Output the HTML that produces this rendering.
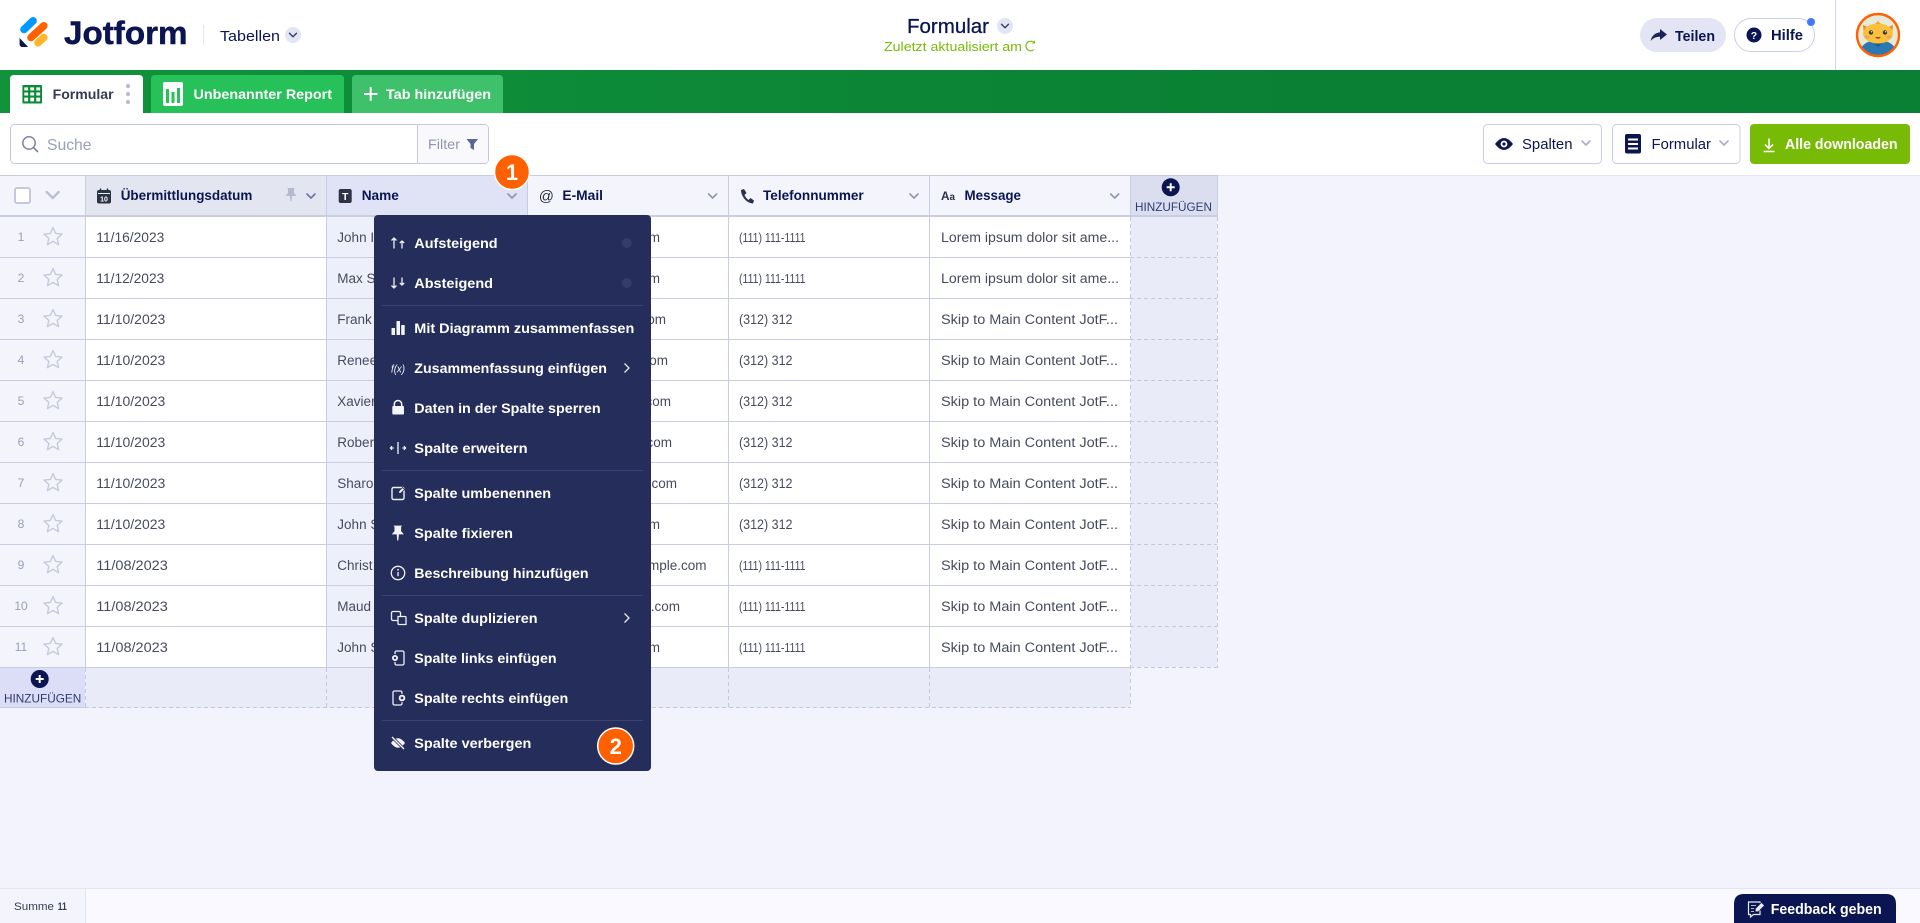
<!DOCTYPE html>
<html lang="de">
<head>
<meta charset="utf-8">
<title>Jotform Tabellen</title>
<style>
html,body{margin:0;padding:0;background:#f3f3fe;width:1920px;height:923px;overflow:hidden}
svg{display:block}
text{font-family:"Liberation Sans",sans-serif;white-space:pre}
.b{font-weight:700}
.hd{font-weight:700;font-size:14px;fill:#0a1551}
.cell{font-size:13.5px;fill:#474b5e}
.ph{font-size:12.5px}
.num{font-size:12px;fill:#9ba0b9;text-anchor:middle}
.m{font-weight:700;font-size:14px;fill:#fff}
.tb{font-size:14.5px;fill:#0a1551}
.add{font-size:12px;fill:#2f3a70}
</style>
</head>
<body>
<svg xmlns="http://www.w3.org/2000/svg" width="1920" height="923" viewBox="0 0 1920 923">
<defs>
<linearGradient id="gb" x1="0" x2="1" y1="0" y2="0"><stop offset="0" stop-color="#10933a"/><stop offset=".68" stop-color="#0a8034"/><stop offset="1" stop-color="#0a8034"/></linearGradient>
<path id="chev" d="M-5 -2.5L0 2.5L5 -2.5" fill="none" stroke-width="2" stroke-linecap="round" stroke-linejoin="round"/>
<polygon id="star" points="0,-9.5 2.59,-3.56 9.03,-2.94 4.18,1.36 5.58,7.69 0,4.4 -5.58,7.69 -4.18,1.36 -9.03,-2.94 -2.59,-3.56" fill="none" stroke="#c6cadc" stroke-width="1.4" stroke-linejoin="round"/>
<path id="pin" d="M-4 -6.5h8l-1 1v4l2.5 3h-4.5l-.5 5.5h-1l-.5-5.5h-4.5l2.5-3v-4z"/>
<g id="plus"><circle r="9" fill="#0a1551"/><path d="M-4 0H4M0 -4V4" stroke="#fff" stroke-width="2"/></g>
<g id="star-row"><use href="#star" x="53" y="237"/></g>
<clipPath id="av"><circle cx="1878" cy="35" r="21"/></clipPath>
</defs>

<!-- page -->
<rect width="1920" height="923" fill="#f3f3fe"/>

<!-- top header -->
<rect width="1920" height="70" fill="#fff"/>
<g fill="none" stroke-linecap="round" stroke-width="7.6">
<path d="M24 29.500L33 20.800" stroke="#0099ff"/>
<path d="M31 37.500L43.800 25.800" stroke="#ff6100"/>
<path d="M38 42.800L43.800 37.500" stroke="#ffb629"/>
</g>
<path d="M19.600 38v6q0 3 3 3h5.500z" fill="#0a1551"/>
<text x="64" y="44" class="b" font-size="32" fill="#0a1551" stroke="#0a1551" stroke-width=".5" textLength="123.500" lengthAdjust="spacingAndGlyphs">Jotform</text>
<rect x="203" y="25" width="1" height="20" fill="#e3e5f5"/>
<text x="220" y="41" font-size="15" fill="#0a1551" textLength="60" lengthAdjust="spacingAndGlyphs">Tabellen</text>
<circle cx="293" cy="35" r="8" fill="#e3e5f5"/>
<use href="#chev" transform="translate(293 35) scale(.7)" stroke="#343c6a"/>

<text x="907" y="33" font-size="20" fill="#0a1551" stroke="#0a1551" stroke-width=".3" textLength="82" lengthAdjust="spacingAndGlyphs">Formular</text>
<circle cx="1005" cy="26" r="8" fill="#e3e5f5"/>
<use href="#chev" transform="translate(1005 26) scale(.7)" stroke="#343c6a"/>
<text x="884" y="51" font-size="13" fill="#78bb07" textLength="138" lengthAdjust="spacingAndGlyphs">Zuletzt aktualisiert am</text>
<path d="M1034 42.500a4.800 4.800 0 1 0 0 7" fill="none" stroke="#78bb07" stroke-width="1.200"/>
<path d="M1035 40.500v3h-3z" fill="#78bb07"/>

<rect x="1640" y="18" width="86" height="34" rx="17" fill="#e3e5f5"/>
<path d="M1660 29l7 5.500-7 5.500v-3.300c-4 0-7 1.300-9.400 4.300c1-5 4-8 9.400-8.800z" fill="#1c2558"/>
<text x="1675" y="41" class="b" font-size="14.500" fill="#0a1551" textLength="40" lengthAdjust="spacingAndGlyphs">Teilen</text>
<rect x="1734.500" y="18.500" width="80" height="33" rx="16.500" fill="#fff" stroke="#c8ceed"/>
<circle cx="1754" cy="35" r="7.500" fill="#0a1551"/>
<text x="1754" y="39" class="b" font-size="10.500" fill="#fff" text-anchor="middle">?</text>
<text x="1771" y="40" class="b" font-size="14.500" fill="#0a1551" textLength="32" lengthAdjust="spacingAndGlyphs">Hilfe</text>
<circle cx="1811" cy="22" r="4" fill="#4277ff"/>
<rect x="1835" y="0" width="1" height="70" fill="#d3d6f0"/>

<!-- avatar -->
<circle cx="1878" cy="35" r="21" fill="#e6ead9"/>
<g clip-path="url(#av)">
<path d="M1860 58v-8q3-7 11-9h14q8 2 11 9v8z" fill="#2b78b3"/>
<path d="M1872 42l6 5 6-5z" fill="#1d5d92"/>
<path d="M1863 25l1 11 8-7zM1893 25l-1 11-8-7z" fill="#f08a24"/>
<ellipse cx="1878" cy="33.500" rx="15" ry="10" fill="#fbc13c"/>
<path d="M1875 24l3-3 3 3z" fill="#f4a72e"/>
<circle cx="1871" cy="32.500" r="2.200" fill="#3a3a3a"/><circle cx="1885" cy="32.500" r="2.200" fill="#3a3a3a"/>
<circle cx="1871.600" cy="31.800" r=".7" fill="#fff"/><circle cx="1885.600" cy="31.800" r=".7" fill="#fff"/>
<ellipse cx="1867" cy="37" rx="2.500" ry="1.600" fill="#f4a06a"/><ellipse cx="1889" cy="37" rx="2.500" ry="1.600" fill="#f4a06a"/>
<path d="M1875 37q3 3.500 6 0z" fill="#b8352a"/>
</g>
<circle cx="1878" cy="35" r="21" fill="none" stroke="#ff6100" stroke-width="2.400"/>

<!-- green tab bar -->
<rect y="70" width="1920" height="43" fill="url(#gb)"/>
<path d="M10 113V79q0-4 4-4h125q4 0 4 4v34z" fill="#fff"/>
<rect x="22.400" y="85" width="19.600" height="18.500" rx="1" fill="#0d8a38"/>
<g fill="#fff">
<rect x="24.300" y="87.400" width="3.800" height="3"/><rect x="30.300" y="87.400" width="3.800" height="3"/><rect x="36.300" y="87.400" width="3.800" height="3"/>
<rect x="24.300" y="92.500" width="3.800" height="3"/><rect x="30.300" y="92.500" width="3.800" height="3"/><rect x="36.300" y="92.500" width="3.800" height="3"/>
<rect x="24.300" y="97.600" width="3.800" height="3.800"/><rect x="30.300" y="97.600" width="3.800" height="3.800"/><rect x="36.300" y="97.600" width="3.800" height="3.800"/>
</g>
<text x="52.600" y="99" class="b" font-size="14" fill="#343c54" textLength="61" lengthAdjust="spacingAndGlyphs">Formular</text>
<circle cx="128" cy="86" r="2.200" fill="#b8bdd0"/><circle cx="128" cy="94" r="2.200" fill="#b8bdd0"/><circle cx="128" cy="102" r="2.200" fill="#b8bdd0"/>

<path d="M151 113V79q0-4 4-4h185q4 0 4 4v34z" fill="#27c15a"/>
<rect x="163" y="82" width="20" height="24" rx="2" fill="#fff"/>
<g fill="#27c15a"><rect x="166" y="89" width="3" height="14"/><rect x="171.500" y="92" width="3" height="11"/><rect x="177" y="88" width="3" height="15"/></g>
<text x="193.500" y="99" class="b" font-size="14" fill="#fff" textLength="138.500" lengthAdjust="spacingAndGlyphs">Unbenannter Report</text>

<path d="M352 113V79q0-4 4-4h143q4 0 4 4v34z" fill="#3fc06b"/>
<path d="M364 94h13.500M370.700 87.200v13.600" stroke="#fff" stroke-width="2"/>
<text x="386" y="99" class="b" font-size="14" fill="#fff" textLength="105" lengthAdjust="spacingAndGlyphs">Tab hinzufügen</text>

<!-- toolbar -->
<rect y="113" width="1920" height="62" fill="#fff"/>
<rect x="10.500" y="124.500" width="478" height="39" rx="4" fill="#fff" stroke="#c3c8de"/>
<path d="M418 125h66.500q3.500 0 3.500 3.500v31q0 3.500-3.500 3.500H418z" fill="#f9f9fd"/>
<rect x="417" y="125" width="1" height="38" fill="#c3c8de"/>
<circle cx="29" cy="143" r="6.200" fill="none" stroke="#7d83a0" stroke-width="1.500"/>
<path d="M33.500 147.500L37.500 151.500" stroke="#7d83a0" stroke-width="1.600" stroke-linecap="round"/>
<text x="47" y="150" font-size="16" fill="#9ba0b9" textLength="44.500" lengthAdjust="spacingAndGlyphs">Suche</text>
<text x="428" y="149" font-size="14" fill="#8f95ad" textLength="32" lengthAdjust="spacingAndGlyphs">Filter</text>
<path d="M466.500 139h11.500l-4 5v6l-3.500-2v-4z" fill="#5b6698"/>

<rect x="1483.500" y="124.500" width="118" height="39" rx="4" fill="#fff" stroke="#c8cde0"/>
<path d="M1495 144q9-12 18 0q-9 12-18 0z" fill="#0a1551"/><circle cx="1504" cy="144" r="3.400" fill="#fff"/><circle cx="1504" cy="144" r="1.600" fill="#0a1551"/>
<text x="1522" y="149" class="tb" textLength="50.500" lengthAdjust="spacingAndGlyphs">Spalten</text>
<use href="#chev" transform="translate(1586 143) scale(.8)" stroke="#a9aec6"/>
<rect x="1612.500" y="124.500" width="127.500" height="39" rx="4" fill="#fff" stroke="#c8cde0"/>
<rect x="1625" y="134" width="16" height="19.500" rx="2" fill="#0a1551"/>
<path d="M1628 139.500h10M1628 144h10M1628 148.500h10" stroke="#fff" stroke-width="1.900"/>
<text x="1651.500" y="149" class="tb" textLength="59.500" lengthAdjust="spacingAndGlyphs">Formular</text>
<use href="#chev" transform="translate(1724 143) scale(.8)" stroke="#a9aec6"/>
<rect x="1750" y="124" width="160" height="40" rx="4" fill="#78bb07"/>
<path d="M1769 138.500v9.500M1765 144.500l4 4 4-4M1763.500 151.500h11" fill="none" stroke="#fff" stroke-width="1.500"/>
<text x="1785" y="149" class="b" font-size="14.500" fill="#fff" textLength="112.500" lengthAdjust="spacingAndGlyphs">Alle downloaden</text>
<rect x="0" y="175" width="1920" height="1" fill="#e3e5f5"/>

<!-- table backgrounds -->
<rect x="0" y="176" width="85" height="491" fill="#f3f4fc"/>
<rect x="86" y="217" width="240" height="450" fill="#fff"/>
<rect x="327" y="217" width="200" height="450" fill="#edf0fb"/>
<rect x="528" y="217" width="602" height="450" fill="#fff"/>
<rect x="1131" y="217" width="86" height="450" fill="#e9ebf8"/>
<rect x="86" y="176" width="240" height="39" fill="#e3e6f0"/>
<rect x="327" y="176" width="200" height="39" fill="#e0e3f6"/>
<rect x="528" y="176" width="602" height="39" fill="#f3f4fc"/>
<rect x="1131" y="176" width="86" height="39" fill="#dadeef"/>
<rect x="0" y="668" width="85" height="40" fill="#dcdef7"/>
<rect x="86" y="668" width="1044" height="40" fill="#e9ecf8"/>

<!-- row lines -->
<g fill="#c8cde0">
<rect x="0" y="175" width="1218" height="1"/>
<rect x="0" y="215" width="1218" height="2"/>
<rect x="0" y="257" width="1130" height="1"/><rect x="0" y="298" width="1130" height="1"/><rect x="0" y="339" width="1130" height="1"/>
<rect x="0" y="380" width="1130" height="1"/><rect x="0" y="421" width="1130" height="1"/><rect x="0" y="462" width="1130" height="1"/>
<rect x="0" y="503" width="1130" height="1"/><rect x="0" y="544" width="1130" height="1"/><rect x="0" y="585" width="1130" height="1"/>
<rect x="0" y="626" width="1130" height="1"/><rect x="0" y="667" width="1130" height="1"/>
<rect x="85" y="176" width="1" height="491"/><rect x="326" y="176" width="1" height="491"/><rect x="527" y="176" width="1" height="491"/>
<rect x="728" y="176" width="1" height="491"/><rect x="929" y="176" width="1" height="491"/><rect x="1130" y="176" width="1" height="41"/><rect x="1217" y="176" width="1" height="41"/>
<rect x="0" y="707" width="85" height="1"/>
</g>
<g stroke="#c3c8da" stroke-dasharray="4 3" fill="none">
<path d="M1130.500 217V708M1217.500 217V668M326.500 668V708M527.500 668V708M728.500 668V708M929.500 668V708M85.500 668V708"/>
<path d="M1130 257.500H1217M1130 298.500H1217M1130 339.500H1217M1130 380.500H1217M1130 421.500H1217M1130 462.500H1217M1130 503.500H1217M1130 544.500H1217M1130 585.500H1217M1130 626.500H1217M1130 667.500H1217M85 707.500H1130"/>
</g>

<!-- column headers -->
<rect x="15" y="188" width="15" height="15" rx="2" fill="#fff" stroke="#c3c8de" stroke-width="2"/>
<use href="#chev" transform="translate(52.700 195) scale(1.200)" stroke="#bcc0d4"/>

<rect x="97" y="190" width="14" height="13.500" rx="2" fill="#2c3345"/>
<path d="M100.500 188.500v3M107.500 188.500v3" stroke="#2c3345" stroke-width="1.500"/>
<rect x="98" y="193" width="12" height=".9" fill="#fff"/>
<text x="104" y="201.500" class="b" font-size="7" fill="#fff" text-anchor="middle">10</text>
<text x="120.700" y="200" class="hd" textLength="131.600" lengthAdjust="spacingAndGlyphs">Übermittlungsdatum</text>
<use href="#pin" x="291" y="194.500" fill="#b5bad0"/>
<use href="#chev" transform="translate(311 196) scale(.8)" stroke="#6c73a8"/>

<rect x="338.700" y="189" width="13" height="14" rx="2" fill="#2c3345"/>
<text x="345.200" y="200" class="b" font-size="10.500" fill="#fff" text-anchor="middle">T</text>
<text x="361.700" y="200" class="hd" textLength="37.200" lengthAdjust="spacingAndGlyphs">Name</text>
<use href="#chev" transform="translate(512 196) scale(.8)" stroke="#8f95ad"/>

<text x="538.800" y="201" font-size="15" fill="#2c3345" textLength="15.200" lengthAdjust="spacingAndGlyphs">@</text>
<text x="562.400" y="200" class="hd" textLength="40.600" lengthAdjust="spacingAndGlyphs">E-Mail</text>
<use href="#chev" transform="translate(712.600 196) scale(.8)" stroke="#8f95ad"/>

<path d="M741 190l3-1 2.500 4-2 2c1 2 2 3.500 4 5l2-2 3.500 2.500-1 3c-6 0-12-7-12-13.500z" fill="#2c3345"/>
<text x="763" y="200" class="hd" textLength="100.700" lengthAdjust="spacingAndGlyphs">Telefonnummer</text>
<use href="#chev" transform="translate(914 196) scale(.8)" stroke="#8f95ad"/>

<text x="941" y="200" class="b" fill="#2c3345" textLength="14" lengthAdjust="spacingAndGlyphs"><tspan font-size="12">A</tspan><tspan font-size="10">a</tspan></text>
<text x="964.500" y="200" class="hd" textLength="56.500" lengthAdjust="spacingAndGlyphs">Message</text>
<use href="#chev" transform="translate(1114.700 196) scale(.8)" stroke="#8f95ad"/>

<use href="#plus" x="1170.700" y="187.300"/>
<text x="1135" y="211" class="add" textLength="77" lengthAdjust="spacingAndGlyphs">HINZUFÜGEN</text>

<!-- rows -->
<g>
<text x="21" y="241" class="num">1</text><use href="#star-row"/>
<text x="96.300" y="242" class="cell" textLength="68" lengthAdjust="spacingAndGlyphs">11/16/2023</text>
<text x="337.300" y="242" class="cell">John I</text>
<text x="660" y="242" class="cell" text-anchor="end">john@example.com</text>
<text x="739" y="242" class="cell ph" textLength="66.500" lengthAdjust="spacingAndGlyphs">(111) 111-1111</text>
<text x="941" y="242" class="cell" textLength="178" lengthAdjust="spacingAndGlyphs">Lorem ipsum dolor sit ame...</text>
</g>
<g transform="translate(0 41)">
<text x="21" y="241" class="num">2</text><use href="#star-row"/>
<text x="96.300" y="242" class="cell" textLength="68" lengthAdjust="spacingAndGlyphs">11/12/2023</text>
<text x="337.300" y="242" class="cell">Max S</text>
<text x="660" y="242" class="cell" text-anchor="end">max@example.com</text>
<text x="739" y="242" class="cell ph" textLength="66.500" lengthAdjust="spacingAndGlyphs">(111) 111-1111</text>
<text x="941" y="242" class="cell" textLength="178" lengthAdjust="spacingAndGlyphs">Lorem ipsum dolor sit ame...</text>
</g>
<g transform="translate(0 82)">
<text x="21" y="241" class="num">3</text><use href="#star-row"/>
<text x="96.300" y="242" class="cell" textLength="69" lengthAdjust="spacingAndGlyphs">11/10/2023</text>
<text x="337.300" y="242" class="cell">Frank</text>
<text x="666" y="242" class="cell" text-anchor="end">frank@example.com</text>
<text x="739" y="242" class="cell" textLength="53.500" lengthAdjust="spacingAndGlyphs">(312) 312</text>
<text x="941" y="242" class="cell" textLength="177" lengthAdjust="spacingAndGlyphs">Skip to Main Content JotF...</text>
</g>
<g transform="translate(0 123)">
<text x="21" y="241" class="num">4</text><use href="#star-row"/>
<text x="96.300" y="242" class="cell" textLength="69" lengthAdjust="spacingAndGlyphs">11/10/2023</text>
<text x="337.300" y="242" class="cell">Renee</text>
<text x="668" y="242" class="cell" text-anchor="end">renee@example.com</text>
<text x="739" y="242" class="cell" textLength="53.500" lengthAdjust="spacingAndGlyphs">(312) 312</text>
<text x="941" y="242" class="cell" textLength="177" lengthAdjust="spacingAndGlyphs">Skip to Main Content JotF...</text>
</g>
<g transform="translate(0 164)">
<text x="21" y="241" class="num">5</text><use href="#star-row"/>
<text x="96.300" y="242" class="cell" textLength="69" lengthAdjust="spacingAndGlyphs">11/10/2023</text>
<text x="337.300" y="242" class="cell">Xavier</text>
<text x="671" y="242" class="cell" text-anchor="end">xavier@example.com</text>
<text x="739" y="242" class="cell" textLength="53.500" lengthAdjust="spacingAndGlyphs">(312) 312</text>
<text x="941" y="242" class="cell" textLength="177" lengthAdjust="spacingAndGlyphs">Skip to Main Content JotF...</text>
</g>
<g transform="translate(0 205)">
<text x="21" y="241" class="num">6</text><use href="#star-row"/>
<text x="96.300" y="242" class="cell" textLength="69" lengthAdjust="spacingAndGlyphs">11/10/2023</text>
<text x="337.300" y="242" class="cell">Rober</text>
<text x="672" y="242" class="cell" text-anchor="end">robert@example.com</text>
<text x="739" y="242" class="cell" textLength="53.500" lengthAdjust="spacingAndGlyphs">(312) 312</text>
<text x="941" y="242" class="cell" textLength="177" lengthAdjust="spacingAndGlyphs">Skip to Main Content JotF...</text>
</g>
<g transform="translate(0 246)">
<text x="21" y="241" class="num">7</text><use href="#star-row"/>
<text x="96.300" y="242" class="cell" textLength="69" lengthAdjust="spacingAndGlyphs">11/10/2023</text>
<text x="337.300" y="242" class="cell">Sharo</text>
<text x="677" y="242" class="cell" text-anchor="end">sharon@example.com</text>
<text x="739" y="242" class="cell" textLength="53.500" lengthAdjust="spacingAndGlyphs">(312) 312</text>
<text x="941" y="242" class="cell" textLength="177" lengthAdjust="spacingAndGlyphs">Skip to Main Content JotF...</text>
</g>
<g transform="translate(0 287)">
<text x="21" y="241" class="num">8</text><use href="#star-row"/>
<text x="96.300" y="242" class="cell" textLength="69" lengthAdjust="spacingAndGlyphs">11/10/2023</text>
<text x="337.300" y="242" class="cell">John S</text>
<text x="660" y="242" class="cell" text-anchor="end">john@example.com</text>
<text x="739" y="242" class="cell" textLength="53.500" lengthAdjust="spacingAndGlyphs">(312) 312</text>
<text x="941" y="242" class="cell" textLength="177" lengthAdjust="spacingAndGlyphs">Skip to Main Content JotF...</text>
</g>
<g transform="translate(0 328)">
<text x="21" y="241" class="num">9</text><use href="#star-row"/>
<text x="96.300" y="242" class="cell" textLength="71.500" lengthAdjust="spacingAndGlyphs">11/08/2023</text>
<text x="337.300" y="242" class="cell">Christ</text>
<text x="706.500" y="242" class="cell" text-anchor="end">christine@example.com</text>
<text x="739" y="242" class="cell ph" textLength="66.500" lengthAdjust="spacingAndGlyphs">(111) 111-1111</text>
<text x="941" y="242" class="cell" textLength="177" lengthAdjust="spacingAndGlyphs">Skip to Main Content JotF...</text>
</g>
<g transform="translate(0 369)">
<text x="21" y="241" class="num">10</text><use href="#star-row"/>
<text x="96.300" y="242" class="cell" textLength="71.500" lengthAdjust="spacingAndGlyphs">11/08/2023</text>
<text x="337.300" y="242" class="cell">Maud</text>
<text x="680" y="242" class="cell" text-anchor="end">maude@example.com</text>
<text x="739" y="242" class="cell ph" textLength="66.500" lengthAdjust="spacingAndGlyphs">(111) 111-1111</text>
<text x="941" y="242" class="cell" textLength="177" lengthAdjust="spacingAndGlyphs">Skip to Main Content JotF...</text>
</g>
<g transform="translate(0 410)">
<text x="21" y="241" class="num">11</text><use href="#star-row"/>
<text x="96.300" y="242" class="cell" textLength="71.500" lengthAdjust="spacingAndGlyphs">11/08/2023</text>
<text x="337.300" y="242" class="cell">John S</text>
<text x="660" y="242" class="cell" text-anchor="end">john@example.com</text>
<text x="739" y="242" class="cell ph" textLength="66.500" lengthAdjust="spacingAndGlyphs">(111) 111-1111</text>
<text x="941" y="242" class="cell" textLength="177" lengthAdjust="spacingAndGlyphs">Skip to Main Content JotF...</text>
</g>

<!-- add row -->
<use href="#plus" x="39.700" y="679"/>
<text x="4" y="702.700" class="add" textLength="77.300" lengthAdjust="spacingAndGlyphs">HINZUFÜGEN</text>

<!-- bottom bar -->
<rect x="0" y="888" width="1920" height="35" fill="#f9f9ff"/>
<rect x="0" y="888" width="85" height="35" fill="#f3f4fc"/>
<rect x="0" y="888" width="1920" height="1" fill="#e3e5f5"/>
<rect x="85" y="888" width="1" height="35" fill="#e3e5f5"/>
<text x="14" y="910" font-size="11" fill="#343c54" textLength="40" lengthAdjust="spacingAndGlyphs">Summe</text>
<text x="57.700" y="910" class="b" font-size="11" fill="#343c54" textLength="9" lengthAdjust="spacingAndGlyphs">11</text>
<path d="M1734 923V904q0-10 10-10h142q10 0 10 10v19z" fill="#0a1551"/>
<path d="M1760 903v-1h-11.500v12.500h2v2.500l3-2.500h6.500v-4" fill="none" stroke="#e8eaf6" stroke-width="1.200"/>
<path d="M1756 909l5.500-5.500 2 2-5.500 5.500h-2zM1751 905.500h5M1751 908.500h3M1751 911.500h3" fill="#e8eaf6" stroke="#e8eaf6" stroke-width=".8"/>
<text x="1770.700" y="914" class="b" font-size="15" fill="#fff" textLength="111" lengthAdjust="spacingAndGlyphs">Feedback geben</text>

<!-- dropdown menu -->
<rect x="374" y="215" width="277" height="556" rx="4" fill="#252d5b"/>
<g fill="#3a4372">
<rect x="382" y="305" width="261" height="1"/><rect x="382" y="470" width="261" height="1"/><rect x="382" y="595" width="261" height="1"/><rect x="382" y="720" width="261" height="1"/>
</g>
<circle cx="626.700" cy="243" r="5" fill="#343c6a"/>
<circle cx="626.700" cy="283" r="5" fill="#343c6a"/>
<text x="414.300" y="248" class="m" textLength="83.300" lengthAdjust="spacingAndGlyphs">Aufsteigend</text>
<text x="414.300" y="288" class="m" textLength="78.700" lengthAdjust="spacingAndGlyphs">Absteigend</text>
<text x="414.300" y="333" class="m" textLength="220" lengthAdjust="spacingAndGlyphs">Mit Diagramm zusammenfassen</text>
<text x="414.300" y="373" class="m" textLength="192.700" lengthAdjust="spacingAndGlyphs">Zusammenfassung einfügen</text>
<text x="414.300" y="413" class="m" textLength="186.300" lengthAdjust="spacingAndGlyphs">Daten in der Spalte sperren</text>
<text x="414.300" y="453" class="m" textLength="113.300" lengthAdjust="spacingAndGlyphs">Spalte erweitern</text>
<text x="414.300" y="498" class="m" textLength="136.700" lengthAdjust="spacingAndGlyphs">Spalte umbenennen</text>
<text x="414.300" y="538" class="m" textLength="98.700" lengthAdjust="spacingAndGlyphs">Spalte fixieren</text>
<text x="414.300" y="578" class="m" textLength="174.300" lengthAdjust="spacingAndGlyphs">Beschreibung hinzufügen</text>
<text x="414.300" y="623" class="m" textLength="123.300" lengthAdjust="spacingAndGlyphs">Spalte duplizieren</text>
<text x="414.300" y="663" class="m" textLength="142.300" lengthAdjust="spacingAndGlyphs">Spalte links einfügen</text>
<text x="414.300" y="703" class="m" textLength="154" lengthAdjust="spacingAndGlyphs">Spalte rechts einfügen</text>
<text x="414.300" y="748" class="m" textLength="117" lengthAdjust="spacingAndGlyphs">Spalte verbergen</text>

<!-- menu icons -->
<g fill="none" stroke="#f0f1f8" stroke-width="1.300">
<path d="M394 248.500V238M391.500 240.500L394 238L396.500 240.500M402 248.500V241M399.800 243L402 241L404.200 243"/>
<path d="M394 277.500V288M391.500 285.500L394 288L396.500 285.500M402 277.500V285M399.800 283L402 285L404.200 283"/>
<path d="M390.700 448h3M392 446.200L390.500 448L392 449.800M402.300 448h3M404 446.200L405.500 448L404 449.800M398 442V454"/>
<rect x="392" y="487.500" width="12" height="12" rx="1.500" stroke-width="1.400"/>
<circle cx="398" cy="573" r="6.700" stroke-width="1.300"/>
<rect x="391.500" y="611.500" width="9" height="9" rx="1.500"/>
<path d="M399 624.500a1 1 0 0 1-1-1v-7h7a1 1 0 0 1 1 1v7z" fill="#252d5b"/>
<rect x="395" y="651" width="9" height="14" rx="1.500"/>
<rect x="393" y="691" width="9" height="14" rx="1.500"/>
</g>
<g fill="#f4f5fb">
<rect x="391.500" y="328" width="3.500" height="7" rx=".5"/><rect x="396.500" y="321" width="3.500" height="14" rx=".5"/><rect x="401.200" y="325" width="3.500" height="10" rx=".5"/>
<text x="391" y="372.500" font-size="11" font-style="italic" fill="#f4f5fb" textLength="14" lengthAdjust="spacingAndGlyphs">f(x)</text>
<rect x="392.300" y="406" width="11.700" height="8.500" rx="1"/>
<path d="M394.300 406v-1.800a3.700 3.700 0 0 1 7.400 0v1.800" fill="none" stroke="#f4f5fb" stroke-width="1.500"/>
<path d="M399 491l3.500-3.500 2 2-3.500 3.500-2.500.5z" stroke="#252d5b" stroke-width=".8"/>
<use href="#pin" x="398" y="532.800" transform="translate(-40 -53.300) scale(1.100)"/>
<rect x="397.400" y="572" width="1.300" height="4.200"/><circle cx="398" cy="569.800" r=".9"/>
<circle cx="395" cy="658" r="3.500" stroke="#252d5b" stroke-width="1"/>
<circle cx="402" cy="698" r="3.800" stroke="#252d5b" stroke-width="1"/>
<path d="M391 743q7-9.500 14 0q-7 9.500-14 0z"/>
</g>
<circle cx="395" cy="658" r="1.200" fill="#252d5b"/>
<circle cx="402" cy="698" r="1.400" fill="#252d5b"/>
<path d="M392.500 737.500L403.500 748.500" stroke="#252d5b" stroke-width="3"/>
<path d="M392 737L404 749" stroke="#f4f5fb" stroke-width="1.300"/>
<path d="M624.500 363.500L629 368L624.500 372.500M624.500 613.500L629 618L624.500 622.500" fill="none" stroke="#e8e9f3" stroke-width="1.300"/>

<!-- badges -->
<circle cx="512" cy="172" r="17.500" fill="#ff6100" stroke="#fff" stroke-width="1.500"/>
<text x="512" y="180" class="b" font-size="22" fill="#fff" text-anchor="middle">1</text>
<circle cx="615.700" cy="746" r="18" fill="#ff6100" stroke="#fff" stroke-width="1.500"/>
<text x="615.700" y="754" class="b" font-size="22" fill="#fff" text-anchor="middle">2</text>
</svg>
</body>
</html>
